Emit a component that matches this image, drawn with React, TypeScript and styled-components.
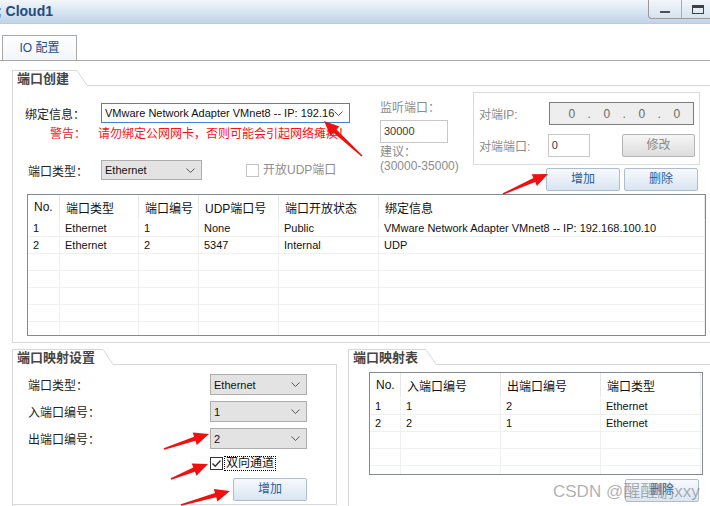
import styled, { createGlobalStyle } from "styled-components";

const GlobalStyle = createGlobalStyle`
  html, body {
    margin: 0;
    padding: 0;
    background: #ffffff;
    overflow: hidden;
  }
  body {
    font-family: "Liberation Sans", "Noto Sans CJK SC", sans-serif;
    font-size: 12px;
    color: #222222;
  }
`;

const Window = styled.div`
  position: relative;
  width: 710px;
  height: 506px;
  overflow: hidden;
  background: #ffffff;
`;

const TitleBar = styled.div`
  display: flex;
  justify-content: space-between;
  height: 23px;
  border-bottom: 1px solid #c9c9c9;
  background: linear-gradient(#f3f6fb, #bfd4ea);
`;
const Title = styled.div`
  margin-left: -3px;
  font-size: 14px;
  font-weight: bold;
  line-height: 23px;
  color: #1f4a85;
  white-space: nowrap;
`;
const WinButtons = styled.div`
  display: flex;
  height: 18px;
  margin-right: -4px;
  border: 1px solid #9a9a9a;
  border-top: none;
  border-right: none;
  border-bottom-left-radius: 4px;
  background: linear-gradient(#f3f6fb, #d6e3f1);
`;
const WinButton = styled.div`
  display: flex;
  align-items: center;
  justify-content: center;
  width: 32px;
  & + & {
    border-left: 1px solid #a9a9a9;
  }
`;
const MinGlyph = styled.div`
  width: 10px;
  height: 2px;
  margin-top: 6px;
  background: #505050;
`;
const MaxGlyph = styled.div`
  box-sizing: border-box;
  width: 12px;
  height: 9px;
  border: 1px solid #404040;
  border-top-width: 3px;
`;

const TabStrip = styled.div`
  display: flex;
  align-items: flex-end;
  height: 36px;
  padding-left: 2px;
  border-bottom: 1px solid #a8a8a8;
`;
const Tab = styled.div`
  box-sizing: border-box;
  width: 75px;
  height: 25px;
  border: 1px solid #a8a8a8;
  border-bottom: none;
  background: linear-gradient(#ffffff, #f2f6fa);
  color: #1e4d8c;
  font-size: 12px;
  line-height: 24px;
  text-align: center;
`;

const Body = styled.div`
  padding: 9px 0 0 12px;
`;

const Group = styled.div<{ $w: number; $ml?: number }>`
  flex-shrink: 0;
  width: ${(p) => p.$w}px;
  margin-left: ${(p) => p.$ml ?? 0}px;
  border-left: 1px solid #d8d8d8;
`;
const GroupHead = styled.div`
  display: flex;
  height: 16px;
`;
const GroupTitle = styled.div`
  padding: 0 8px 0 4px;
  border-top: 1px solid #d8d8d8;
  font-size: 13px;
  font-weight: bold;
  line-height: 16px;
  color: #454545;
  white-space: nowrap;
`;
const HeadRule = styled.div`
  flex: 1;
  border-bottom: 1px solid #d8d8d8;
`;
const GroupBody = styled.div<{ $h: number; $pad: string; $edge?: boolean }>`
  box-sizing: border-box;
  height: ${(p) => p.$h}px;
  padding: ${(p) => p.$pad};
  border-right: ${(p) => (p.$edge ? "1px solid #d8d8d8" : "none")};
  border-bottom: ${(p) => (p.$edge ? "1px solid #d8d8d8" : "none")};
`;
const CreateBody = styled.div`
  height: 256px;
  padding-left: 12px;
  border-bottom: 1px solid #d8d8d8;
`;

function GroupHeader({ title }: { title: string }) {
  return (
    <GroupHead>
      <GroupTitle>{title}</GroupTitle>
      <svg width="10" height="16" style={{ display: "block" }}>
        <line x1="0" y1="0.5" x2="10" y2="15.5" stroke="#d8d8d8" />
      </svg>
      <HeadRule />
    </GroupHead>
  );
}

const TopRow = styled.div`
  display: flex;
  align-items: flex-start;
`;
const LeftCol = styled.div`
  width: 325px;
  margin-top: 17px;
`;
const FieldRow = styled.div<{ $mt?: number }>`
  display: flex;
  align-items: center;
  margin-top: ${(p) => p.$mt ?? 0}px;
`;
const FieldLabel = styled.div<{ $w: number; $indent?: number }>`
  box-sizing: border-box;
  width: ${(p) => p.$w}px;
  padding-left: ${(p) => p.$indent ?? 0}px;
  font-size: 12px;
  color: #222222;
  white-space: nowrap;
`;
const SelectBox = styled.div<{ $w: number; $h: number; $active?: boolean }>`
  display: flex;
  align-items: center;
  box-sizing: border-box;
  width: ${(p) => p.$w}px;
  height: ${(p) => p.$h}px;
  padding: 0 6px 0 3px;
  border: 1px solid ${(p) => (p.$active ? "#3c86d4" : "#adadad")};
  background: ${(p) => (p.$active ? "#ffffff" : "#e3e3e3")};
  font-size: 11px;
  color: #111111;
`;
const SelectText = styled.span`
  flex: 1;
  overflow: hidden;
  white-space: nowrap;
`;
const WarnRow = styled.div`
  display: flex;
  margin-top: 4px;
  height: 14px;
  line-height: 14px;
  white-space: nowrap;
`;
const WarnLabel = styled.div`
  box-sizing: border-box;
  width: 75px;
  padding-left: 25px;
  color: #e02a2a;
`;
const WarnText = styled.div`
  color: #ff1010;
`;

const CheckBox = styled.div<{ $muted?: boolean }>`
  display: flex;
  align-items: center;
  justify-content: center;
  box-sizing: border-box;
  width: 13px;
  height: 13px;
  border: 1px solid ${(p) => (p.$muted ? "#c4c4c4" : "#333333")};
  background: #ffffff;
`;
const CheckText = styled.span<{ $muted?: boolean; $focus?: boolean }>`
  margin-left: ${(p) => (p.$focus ? 2 : 3)}px;
  padding: 0 1px;
  outline: ${(p) => (p.$focus ? "1px dotted #000" : "none")};
  line-height: 13px;
  color: ${(p) => (p.$muted ? "#8e8e8e" : "#111111")};
  white-space: nowrap;
`;
const UdpCheck = styled.div`
  display: flex;
  align-items: center;
  margin-left: 44px;
`;

const MidCol = styled.div`
  width: 70px;
  margin: 15px 0 0 30px;
  color: #8c8c8c;
  line-height: 14px;
  white-space: nowrap;
`;
const PlainInput = styled.div<{ $w: number; $mt?: number }>`
  box-sizing: border-box;
  width: ${(p) => p.$w}px;
  height: 23px;
  margin-top: ${(p) => p.$mt ?? 0}px;
  padding-left: 3px;
  border: 1px solid #c8c8c8;
  background: #ffffff;
  font-size: 11px;
  line-height: 21px;
  color: #3a3a3a;
`;
const Hint = styled.div<{ $mt?: number }>`
  margin-top: ${(p) => p.$mt ?? 0}px;
  font-size: 12px;
`;

const RightCol = styled.div`
  width: 227px;
  margin: 6px 0 0 23px;
`;
const PeerBox = styled.div`
  box-sizing: border-box;
  height: 73px;
  padding: 9px 4px 0 5px;
  border: 1px solid #dadada;
`;
const PeerRow = styled.div<{ $mt?: number }>`
  display: flex;
  align-items: center;
  margin-top: ${(p) => p.$mt ?? 0}px;
`;
const PeerLabel = styled.div`
  width: 70px;
  color: #8c8c8c;
  white-space: nowrap;
`;
const IpField = styled.div`
  display: grid;
  grid-template-columns: repeat(7, 17.5px);
  align-items: center;
  box-sizing: border-box;
  width: 145px;
  height: 23px;
  padding-left: 13px;
  border: 1px solid #7c7c7c;
  background: #eeeeee;
  font-size: 12px;
  color: #6a6a6a;
  text-align: center;
`;
const ButtonRow = styled.div`
  display: flex;
  justify-content: flex-end;
  gap: 4px;
  margin-top: 3px;
  padding-right: 2px;
`;
const Button = styled.div<{ $disabled?: boolean; $ml?: number; $mt?: number }>`
  box-sizing: border-box;
  width: 74px;
  height: 23px;
  margin-left: ${(p) => p.$ml ?? 0}px;
  margin-top: ${(p) => p.$mt ?? 0}px;
  border: 1px solid ${(p) => (p.$disabled ? "#b4b4b4" : "#aebdcc")};
  border-radius: 2px;
  background: ${(p) =>
    p.$disabled
      ? "linear-gradient(#f6f6f6, #dddddd)"
      : "linear-gradient(#f7fafd, #d9e5f1)"};
  color: ${(p) => (p.$disabled ? "#8a8a8a" : "#2c5d9c")};
  font-size: 12px;
  line-height: 21px;
  text-align: center;
`;

const Grid = styled.div<{ $w: number; $h: number; $ml: number; $mt: number }>`
  box-sizing: border-box;
  width: ${(p) => p.$w}px;
  height: ${(p) => p.$h}px;
  margin: ${(p) => p.$mt}px 0 0 ${(p) => p.$ml}px;
  border: 1px solid #858a92;
  overflow: hidden;
  background: #ffffff;
`;
const GridRow = styled.div<{ $cols: string; $head?: boolean }>`
  display: grid;
  grid-template-columns: ${(p) => p.$cols};
  box-sizing: border-box;
  height: ${(p) => (p.$head ? 25 : 17)}px;
  border-bottom: 1px solid ${(p) => (p.$head ? "#ffffff" : "#f0f0f0")};
`;
const GridCell = styled.div<{ $head?: boolean }>`
  display: flex;
  align-items: center;
  padding-left: ${(p) => (p.$head ? 6 : 5)}px;
  border-right: 1px solid ${(p) => (p.$head ? "#e6e6e6" : "#f0f0f0")};
  font-size: ${(p) => (p.$head ? 12 : 11)}px;
  color: #111111;
  white-space: nowrap;
  overflow: hidden;
`;

const BottomRow = styled.div`
  display: flex;
  margin-top: 6px;
`;
const MapRow = styled.div<{ $mt?: number }>`
  display: flex;
  align-items: center;
  justify-content: space-between;
  width: 279px;
  margin-top: ${(p) => p.$mt ?? 0}px;
`;
const CheckRow = styled.div`
  display: flex;
  align-items: center;
  margin-top: 8px;
  padding-left: 182px;
`;

const Overlay = styled.svg`
  position: absolute;
  left: 0;
  top: 0;
  pointer-events: none;
`;
const Watermark = styled.div`
  position: absolute;
  left: 553px;
  top: 477px;
  font-size: 17px;
  color: rgba(110, 110, 110, 0.55);
  white-space: nowrap;
  pointer-events: none;
`;

const portCols = "32px 79px 60px 80px 100px 1fr";
const mapCols = "31px 100px 100px 100px 1fr";

const portRows = [
  ["1", "Ethernet", "1", "None", "Public", "VMware Network Adapter VMnet8 -- IP: 192.168.100.10"],
  ["2", "Ethernet", "2", "5347", "Internal", "UDP"],
];
const mapRows = [
  ["1", "1", "2", "Ethernet"],
  ["2", "2", "1", "Ethernet"],
];

const arrows: [number, number, number, number][] = [
  [362, 156, 324, 121],
  [503, 194, 548, 174],
  [164, 449, 209, 434],
  [171, 479, 208, 464],
  [181, 505, 230, 491],
];

function arrowPoints([tx, ty, px, py]: [number, number, number, number]) {
  const dx = px - tx;
  const dy = py - ty;
  const len = Math.hypot(dx, dy);
  const ux = dx / len;
  const uy = dy / len;
  const nx = -uy;
  const ny = ux;
  const bx = px - ux * 15;
  const by = py - uy * 15;
  const pts = [
    [tx + nx * 0.8, ty + ny * 0.8],
    [bx + nx * 2.2, by + ny * 2.2],
    [bx + nx * 6.5, by + ny * 6.5],
    [px, py],
    [bx - nx * 6.5, by - ny * 6.5],
    [bx - nx * 2.2, by - ny * 2.2],
    [tx - nx * 0.8, ty - ny * 0.8],
  ];
  return pts.map((p) => p.map((v) => v.toFixed(1)).join(",")).join(" ");
}

function Chevron() {
  return (
    <svg width="9" height="5" viewBox="0 0 9 5">
      <polyline points="0.5,0.5 4.5,4.5 8.5,0.5" fill="none" stroke="#555" strokeWidth="1" />
    </svg>
  );
}

function Tick() {
  return (
    <svg width="11" height="11" viewBox="0 0 11 11">
      <polyline points="1.5,5.5 4.2,8.2 9.5,2.5" fill="none" stroke="#333" strokeWidth="1.4" />
    </svg>
  );
}

export default function App() {
  return (
    <Window>
      <GlobalStyle />
      <TitleBar>
        <Title>; Cloud1</Title>
        <WinButtons>
          <WinButton>
            <MinGlyph />
          </WinButton>
          <WinButton>
            <MaxGlyph />
          </WinButton>
        </WinButtons>
      </TitleBar>
      <TabStrip>
        <Tab>IO 配置</Tab>
      </TabStrip>

      <Body>
        <Group $w={700}>
          <GroupHeader title="端口创建" />
          <CreateBody>
            <TopRow>
              <LeftCol>
                <FieldRow>
                  <FieldLabel $w={76}>绑定信息：</FieldLabel>
                  <SelectBox $w={249} $h={20} $active>
                    <SelectText>VMware Network Adapter VMnet8 -- IP: 192.168.100.10</SelectText>
                    <Chevron />
                  </SelectBox>
                </FieldRow>
                <WarnRow>
                  <WarnLabel>警告：</WarnLabel>
                  <WarnText>请勿绑定公网网卡，否则可能会引起网络瘫痪！</WarnText>
                </WarnRow>
                <FieldRow $mt={19}>
                  <FieldLabel $w={76} $indent={3}>端口类型：</FieldLabel>
                  <SelectBox $w={101} $h={20}>
                    <SelectText>Ethernet</SelectText>
                    <Chevron />
                  </SelectBox>
                  <UdpCheck>
                    <CheckBox $muted />
                    <CheckText $muted>开放UDP端口</CheckText>
                  </UdpCheck>
                </FieldRow>
              </LeftCol>

              <MidCol>
                <Hint>监听端口：</Hint>
                <PlainInput $w={68} $mt={5}>30000</PlainInput>
                <Hint $mt={2}>建议：</Hint>
                <Hint>(30000-35000)</Hint>
              </MidCol>

              <RightCol>
                <PeerBox>
                  <PeerRow>
                    <PeerLabel>对端IP:</PeerLabel>
                    <IpField>
                      <span>0</span>
                      <span>.</span>
                      <span>0</span>
                      <span>.</span>
                      <span>0</span>
                      <span>.</span>
                      <span>0</span>
                    </IpField>
                  </PeerRow>
                  <PeerRow $mt={9}>
                    <PeerLabel>对端端口:</PeerLabel>
                    <PlainInput $w={43}>0</PlainInput>
                    <Button $disabled $ml={32}>修改</Button>
                  </PeerRow>
                </PeerBox>
                <ButtonRow>
                  <Button>增加</Button>
                  <Button>删除</Button>
                </ButtonRow>
              </RightCol>
            </TopRow>

            <Grid $w={679} $h={142} $ml={2} $mt={3}>
              <GridRow $cols={portCols} $head>
                {["No.", "端口类型", "端口编号", "UDP端口号", "端口开放状态", "绑定信息"].map((h) => (
                  <GridCell key={h} $head>
                    {h}
                  </GridCell>
                ))}
              </GridRow>
              {[0, 1, 2, 3, 4, 5, 6].map((i) => (
                <GridRow key={i} $cols={portCols}>
                  {(portRows[i] ?? ["", "", "", "", "", ""]).map((c, j) => (
                    <GridCell key={j}>{c}</GridCell>
                  ))}
                </GridRow>
              ))}
            </Grid>
          </CreateBody>
        </Group>

        <BottomRow>
          <Group $w={324}>
            <GroupHeader title="端口映射设置" />
            <GroupBody $h={140} $pad="9px 0 0 15px" $edge>
              <MapRow>
                <FieldLabel $w={150}>端口类型：</FieldLabel>
                <SelectBox $w={97} $h={21}>
                  <SelectText>Ethernet</SelectText>
                  <Chevron />
                </SelectBox>
              </MapRow>
              <MapRow $mt={6}>
                <FieldLabel $w={150}>入端口编号：</FieldLabel>
                <SelectBox $w={97} $h={21}>
                  <SelectText>1</SelectText>
                  <Chevron />
                </SelectBox>
              </MapRow>
              <MapRow $mt={6}>
                <FieldLabel $w={150}>出端口编号：</FieldLabel>
                <SelectBox $w={97} $h={21}>
                  <SelectText>2</SelectText>
                  <Chevron />
                </SelectBox>
              </MapRow>
              <CheckRow>
                <CheckBox>
                  <Tick />
                </CheckBox>
                <CheckText $focus>双向通道</CheckText>
              </CheckRow>
              <Button $ml={205} $mt={8}>增加</Button>
            </GroupBody>
          </Group>

          <Group $w={370} $ml={11}>
            <GroupHeader title="端口映射表" />
            <GroupBody $h={140} $pad="0 0 0 20px">
              <Grid $w={334} $h={103} $ml={0} $mt={7}>
                <GridRow $cols={mapCols} $head>
                  {["No.", "入端口编号", "出端口编号", "端口类型", ""].map((h, j) => (
                    <GridCell key={j} $head>
                      {h}
                    </GridCell>
                  ))}
                </GridRow>
                {[0, 1, 2, 3, 4].map((i) => (
                  <GridRow key={i} $cols={mapCols}>
                    {[...(mapRows[i] ?? ["", "", "", ""]), ""].map((c, j) => (
                      <GridCell key={j}>{c}</GridCell>
                    ))}
                  </GridRow>
                ))}
              </Grid>
              <Button $ml={256} $mt={4}>删除</Button>
            </GroupBody>
          </Group>
        </BottomRow>
      </Body>

      <Overlay width="710" height="506">
        {arrows.map((a, i) => (
          <polygon key={i} points={arrowPoints(a)} fill="#f01010" />
        ))}
      </Overlay>
      <Watermark>CSDN @醒醒鹏xxy</Watermark>
    </Window>
  );
}
